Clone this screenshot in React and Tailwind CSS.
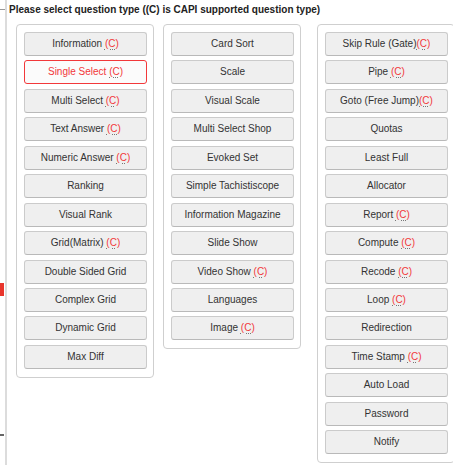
const columns = [
  [
    ['Information', ' '],
    ['Single Select', ' ', true],
    ['Multi Select', ' '],
    ['Text Answer', ' '],
    ['Numeric Answer', ' '],
    ['Ranking'],
    ['Visual Rank'],
    ['Grid(Matrix)', ' '],
    ['Double Sided Grid'],
    ['Complex Grid'],
    ['Dynamic Grid'],
    ['Max Diff'],
  ],
  [
    ['Card Sort'],
    ['Scale'],
    ['Visual Scale'],
    ['Multi Select Shop'],
    ['Evoked Set'],
    ['Simple Tachistiscope'],
    ['Information Magazine'],
    ['Slide Show'],
    ['Video Show', ' '],
    ['Languages'],
    ['Image', ' '],
  ],
  [
    ['Skip Rule (Gate)', ''],
    ['Pipe', ' '],
    ['Goto (Free Jump)', ''],
    ['Quotas'],
    ['Least Full'],
    ['Allocator'],
    ['Report', ' '],
    ['Compute', ' '],
    ['Recode', ' '],
    ['Loop', ' '],
    ['Redirection'],
    ['Time Stamp', ' '],
    ['Auto Load'],
    ['Password'],
    ['Notify'],
  ],
];

function TypeButton({ label, capi, active }) {
  return (
    <button
      className={
        'h-[24px] w-[123px] shrink-0 rounded-[3px] border text-[10px] leading-none ' +
        (active
          ? 'border-[#f2383a] bg-[#fbfbfb] text-[#f2383a]'
          : 'border-[#cbcbcb] border-b-[#b9b9b9] bg-[#efefef] text-[#333]')
      }
    >
      {label}
      {capi !== undefined && (
        <>
          {capi}
          <abbr
            title="CAPI supported"
            className="text-[#f2383a] underline decoration-dotted decoration-[#777] underline-offset-2 no-underline-skip"
          >
            (C)
          </abbr>
        </>
      )}
    </button>
  );
}

export default function App() {
  return (
    <div
      className="flex h-[465px] w-[453px] overflow-hidden bg-white"
      style={{ fontFamily: '"Liberation Sans", Arial, sans-serif' }}
    >
      {/* left gutter marks */}
      <div className="flex w-[5px] shrink-0 flex-col">
        <div className="mt-[9px] h-px bg-[#999]" />
        <div className="mt-[273px] h-[13px] w-[4px] bg-[#e8352c]" />
        <div className="mt-[138px] h-[2px] w-[4px] bg-[#666]" />
      </div>

      <div className="flex-1 border-l-2 border-[#dcdcdc] pl-[2px]">
        <h3 className="mt-[3px] text-[10px] font-bold leading-[13px] text-[#222]">
          Please select question type ((C) is CAPI supported question type)
        </h3>

        <div className="ml-[7px] mt-[8px] flex items-start">
          {columns.map((col, i) => (
            <div
              key={i}
              className={
                'flex w-[138px] shrink-0 flex-col gap-[4.45px] rounded-[4px] border border-[#cfcfcf] px-[7px] pb-[8px] pt-[7px] ' +
                (i === 1 ? 'ml-[9px]' : i === 2 ? 'ml-[16px]' : '')
              }
            >
              {col.map(([label, capi, active]) => (
                <TypeButton key={label} label={label} capi={capi} active={active} />
              ))}
            </div>
          ))}
        </div>
      </div>
    </div>
  );
}
